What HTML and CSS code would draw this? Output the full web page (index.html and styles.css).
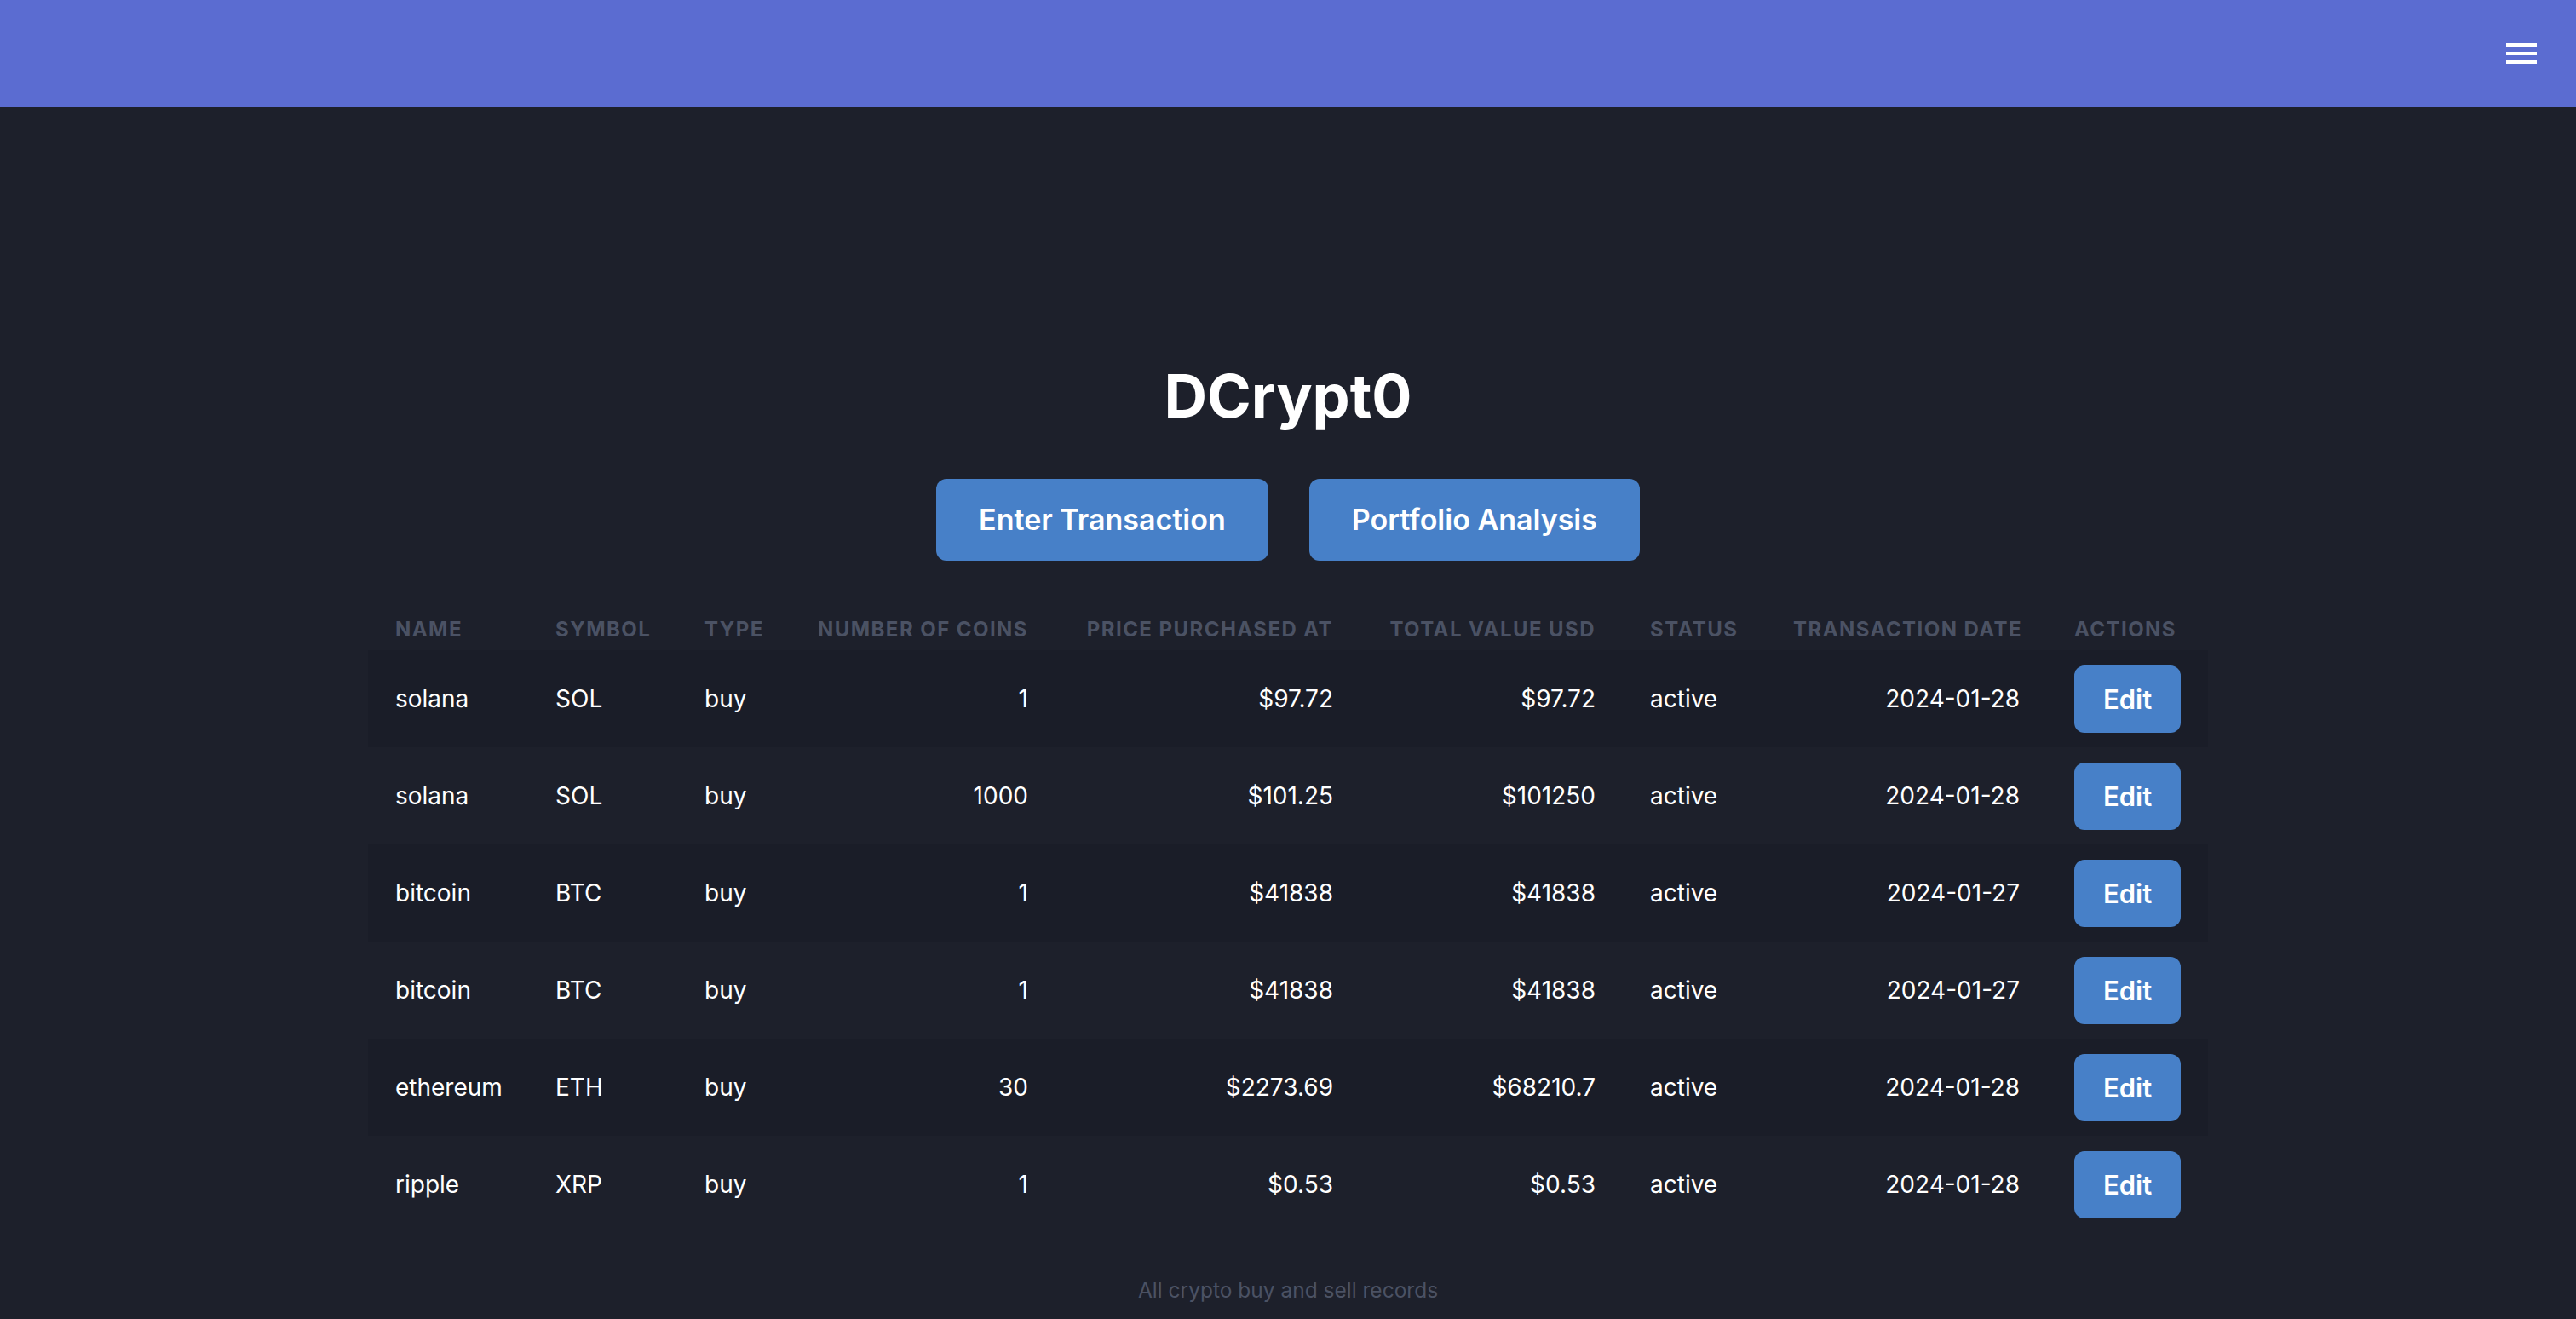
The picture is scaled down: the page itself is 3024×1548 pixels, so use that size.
FILE: index.html
```html
<!DOCTYPE html>
<html lang="en">
<head>
<meta charset="utf-8">
<title>DCrypt0</title>
<link rel="stylesheet" href="styles.css">
</head>
<body>
<header class="topbar">
  <button class="menu-btn" aria-label="Menu">
    <svg width="36" height="24" viewBox="0 0 36 24" aria-hidden="true">
      <rect x="0" y="0" width="36" height="4" fill="#ffffff"/>
      <rect x="0" y="10" width="36" height="4" fill="#ffffff"/>
      <rect x="0" y="20" width="36" height="4" fill="#ffffff"/>
    </svg>
  </button>
</header>
<main class="main">
  <h1 class="title">DCrypt0</h1>
  <div class="actions">
    <button class="btn">Enter Transaction</button>
    <button class="btn">Portfolio Analysis</button>
  </div>
  <table class="records">
    <caption class="records-caption">All crypto buy and sell records</caption>
    <thead>
      <tr>
        <th class="c-name">Name</th>
        <th class="c-symbol">Symbol</th>
        <th class="c-type">Type</th>
        <th class="c-num num">Number of coins</th>
        <th class="c-price num">Price purchased at</th>
        <th class="c-total num">Total value USD</th>
        <th class="c-status">Status</th>
        <th class="c-date num">Transaction date</th>
        <th class="c-actions">Actions</th>
      </tr>
    </thead>
    <tbody>
      <tr>
        <td>solana</td><td>SOL</td><td>buy</td><td class="num">1</td><td class="num">$97.72</td><td class="num">$97.72</td><td>active</td><td class="num">2024-01-28</td><td><button class="edit-btn">Edit</button></td>
      </tr>
      <tr>
        <td>solana</td><td>SOL</td><td>buy</td><td class="num">1000</td><td class="num">$101.25</td><td class="num">$101250</td><td>active</td><td class="num">2024-01-28</td><td><button class="edit-btn">Edit</button></td>
      </tr>
      <tr>
        <td>bitcoin</td><td>BTC</td><td>buy</td><td class="num">1</td><td class="num">$41838</td><td class="num">$41838</td><td>active</td><td class="num">2024-01-27</td><td><button class="edit-btn">Edit</button></td>
      </tr>
      <tr>
        <td>bitcoin</td><td>BTC</td><td>buy</td><td class="num">1</td><td class="num">$41838</td><td class="num">$41838</td><td>active</td><td class="num">2024-01-27</td><td><button class="edit-btn">Edit</button></td>
      </tr>
      <tr>
        <td>ethereum</td><td>ETH</td><td>buy</td><td class="num">30</td><td class="num">$2273.69</td><td class="num">$68210.7</td><td>active</td><td class="num">2024-01-28</td><td><button class="edit-btn">Edit</button></td>
      </tr>
      <tr>
        <td>ripple</td><td>XRP</td><td>buy</td><td class="num">1</td><td class="num">$0.53</td><td class="num">$0.53</td><td>active</td><td class="num">2024-01-28</td><td><button class="edit-btn">Edit</button></td>
      </tr>
    </tbody>
  </table>
</main>
</body>
</html>
```

FILE: styles.css
```css
* {
  box-sizing: border-box;
}

html, body {
  margin: 0;
  padding: 0;
  background: #1d202b;
  color: #ffffff;
  font-family: Inter, "Noto Sans", "Liberation Sans", sans-serif;
}

.topbar {
  height: 126px;
  background: #5b6cd1;
  display: flex;
  align-items: center;
  justify-content: flex-end;
  padding: 0 46px 0 0;
}

.menu-btn {
  background: none;
  border: 0;
  padding: 0;
  display: flex;
  cursor: pointer;
}

.main {
  display: flex;
  flex-direction: column;
  align-items: center;
  padding-top: 304px;
}

.title {
  margin: 0;
  font-size: 70px;
  line-height: 70px;
  font-weight: 700;
  color: #ffffff;
}

.actions {
  display: flex;
  gap: 48px;
  margin-top: 62px;
}

.btn {
  font-family: inherit;
  font-size: 34px;
  line-height: 40px;
  font-weight: 600;
  color: #ffffff;
  background: #4780c8;
  border: 0;
  border-radius: 12px;
  padding: 28px 50px;
  cursor: pointer;
}

.records {
  margin-top: 57px;
  width: 2160px;
  table-layout: fixed;
  border-collapse: collapse;
  border-spacing: 0;
}

.records th {
  font-size: 24px;
  line-height: 24px;
  font-weight: 700;
  text-transform: uppercase;
  letter-spacing: 0.06em;
  color: #4b5264;
  padding: 12px 32px;
  text-align: left;
  white-space: nowrap;
}

.records td {
  font-size: 28px;
  font-weight: 400;
  color: #ffffff;
  padding: 0 32px;
  text-align: left;
  vertical-align: middle;
  white-space: nowrap;
}

.records .num {
  text-align: right;
}

.records tbody tr {
  height: 114px;
}

.records tbody tr:nth-child(odd) {
  background: #1a1d28;
}

.c-name { width: 188px; }
.c-symbol { width: 175px; }
.c-type { width: 133px; }
.c-num { width: 311px; }
.c-price { width: 358px; }
.c-total { width: 308px; }
.c-status { width: 168px; }
.c-date { width: 330px; }
.c-actions { width: 189px; }

.edit-btn {
  font-family: inherit;
  font-size: 31px;
  line-height: 39px;
  font-weight: 600;
  color: #ffffff;
  background: #4780c8;
  border: 0;
  border-radius: 12px;
  padding: 20px 34px;
  cursor: pointer;
  display: block;
}

.records-caption {
  caption-side: bottom;
  font-size: 24.5px;
  line-height: 32px;
  color: #4b5264;
  padding-top: 51px;
  text-align: center;
}
```
